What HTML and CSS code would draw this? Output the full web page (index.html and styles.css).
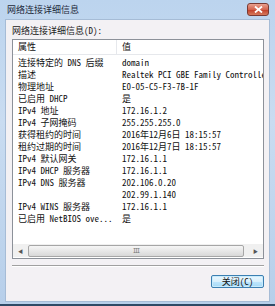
FILE: index.html
```html
<!DOCTYPE html>
<html lang="zh-CN">
<head>
  <meta charset="UTF-8" />
  <title>网络连接详细信息</title>
  <link rel="stylesheet" href="styles.css">
</head>
<body>
  <div class="window">
    <!-- Title bar -->
    <div class="titlebar">
      <span class="title">网络连接详细信息</span>
      <span class="close">
        <svg width="9" height="7" viewBox="0 0 9 7">
          <path d="M1 0.5 L8 6.5 M8 0.5 L1 6.5" stroke="#fff" stroke-width="1.8" />
        </svg>
      </span>
    </div>

    <div class="client">
      <div class="label">网络连接详细信息(D):</div>

      <div class="listbox">
        <div class="row head">
          <span class="col-key">属性</span>
          <span class="col-val">值</span>
        </div>
        <div class="rows">
          <div class="row"><span class="col-key">连接特定的 DNS 后缀</span><span class="col-val">domain</span></div>
          <div class="row"><span class="col-key">描述</span><span class="col-val">Realtek PCI GBE Family Controller</span></div>
          <div class="row"><span class="col-key">物理地址</span><span class="col-val">E0-05-C5-F3-7B-1F</span></div>
          <div class="row"><span class="col-key">已启用 DHCP</span><span class="col-val">是</span></div>
          <div class="row"><span class="col-key">IPv4 地址</span><span class="col-val">172.16.1.2</span></div>
          <div class="row"><span class="col-key">IPv4 子网掩码</span><span class="col-val">255.255.255.0</span></div>
          <div class="row"><span class="col-key">获得租约的时间</span><span class="col-val">2016年12月6日 18:15:57</span></div>
          <div class="row"><span class="col-key">租约过期的时间</span><span class="col-val">2016年12月7日 18:15:57</span></div>
          <div class="row"><span class="col-key">IPv4 默认网关</span><span class="col-val">172.16.1.1</span></div>
          <div class="row"><span class="col-key">IPv4 DHCP 服务器</span><span class="col-val">172.16.1.1</span></div>
          <div class="row"><span class="col-key">IPv4 DNS 服务器</span><span class="col-val">202.106.0.20</span></div>
          <div class="row"><span class="col-key"></span><span class="col-val">202.99.1.140</span></div>
          <div class="row"><span class="col-key">IPv4 WINS 服务器</span><span class="col-val">172.16.1.1</span></div>
          <div class="row"><span class="col-key">已启用 NetBIOS ove...</span><span class="col-val">是</span></div>
        </div>

        <!-- Horizontal scrollbar -->
        <div class="hscroll">
          <span class="arrow">&#9664;</span>
          <span class="thumb"><span class="grip">III</span></span>
          <span class="track"></span>
          <span class="arrow">&#9654;</span>
        </div>
      </div>

      <div class="separator"></div>

      <div class="buttons">
        <button class="btn">关闭(C)</button>
      </div>
    </div>
  </div>
</body>
</html>
```

FILE: styles.css
```css
* {
  box-sizing: border-box;
}

body {
  margin: 0;
  font-family: "Noto Sans Mono CJK SC", "Noto Sans CJK SC", monospace;
  font-size: 9px;
  color: #111;
}

.window {
  width: 275px;
  height: 306px;
  background: linear-gradient(to bottom, #bcd4ee 0%, #c9dcf1 40%, #b7cfea 100%);
  border-bottom: 2px solid #2e4a66;
  display: flex;
  flex-direction: column;
}

.titlebar {
  height: 19px;
  display: flex;
  align-items: center;
  justify-content: space-between;
  padding: 0 6px 0 7px;
}

.title {
  color: #1e2a3a;
  font-size: 9px;
}

.close {
  width: 22px;
  height: 13px;
  margin-top: -1px;
  border: 1px solid #7a3a33;
  border-radius: 3px;
  background: linear-gradient(to bottom, #e8a190 0%, #d4644f 50%, #c2412c 55%, #d67a5c 100%);
  display: flex;
  align-items: center;
  justify-content: center;
}

.client {
  flex: 1;
  margin: 0 5px 2px 5px;
  background: #f3f1f4;
  border: 1px solid #a6bcd6;
  padding: 5px 5px 0 6px;
}

.label {
  height: 14px;
  line-height: 12px;
  color: #222;
}

.listbox {
  height: 220px;
  border: 1px solid #8c9199;
  background: #fff;
  display: flex;
  flex-direction: column;
}

.row {
  display: flex;
  height: 12px;
  line-height: 12px;
  white-space: nowrap;
  overflow: hidden;
}

.row.head {
  height: 15px;
  line-height: 14px;
  border-bottom: 1px solid #e6e8ec;
  margin-bottom: 2px;
}

.col-key {
  width: 104px;
  padding-left: 5px;
  flex-shrink: 0;
}

.head .col-key {
  border-right: 1px solid #e6e8ec;
}

.col-val {
  padding-left: 5px;
  overflow: hidden;
}

.rows {
  flex: 1;
}

.hscroll {
  height: 13px;
  margin: 0 0 1px 0;
  display: flex;
  align-items: center;
  background: #f0f0f0;
}

.arrow {
  width: 15px;
  text-align: center;
  font-size: 5px;
  color: #555;
}

.thumb {
  width: 216px;
  height: 12px;
  border: 1px solid #a6a6a6;
  border-radius: 2px;
  background: linear-gradient(to bottom, #f6f6f6, #d8d8d8);
  display: flex;
  align-items: center;
  justify-content: center;
}

.grip {
  font-size: 6px;
  color: #777;
  letter-spacing: -1px;
}

.track {
  flex: 1;
}

.separator {
  margin-top: 6px;
  height: 2px;
  border-top: 1px solid #a0a0a0;
  border-bottom: 1px solid #fff;
}

.buttons {
  display: flex;
  justify-content: flex-end;
  padding-top: 8px;
}

.btn {
  width: 53px;
  height: 13px;
  padding: 0;
  font-family: inherit;
  font-size: 9px;
  line-height: 11px;
  color: #111;
  border: 1px solid #3c7fb1;
  border-radius: 2px;
  background: linear-gradient(to bottom, #eaf6fd 0%, #d9f0fc 50%, #bee6fd 51%, #a7d9f5 100%);
  box-shadow: inset 0 0 0 1px #c8ecfd;
}
```
